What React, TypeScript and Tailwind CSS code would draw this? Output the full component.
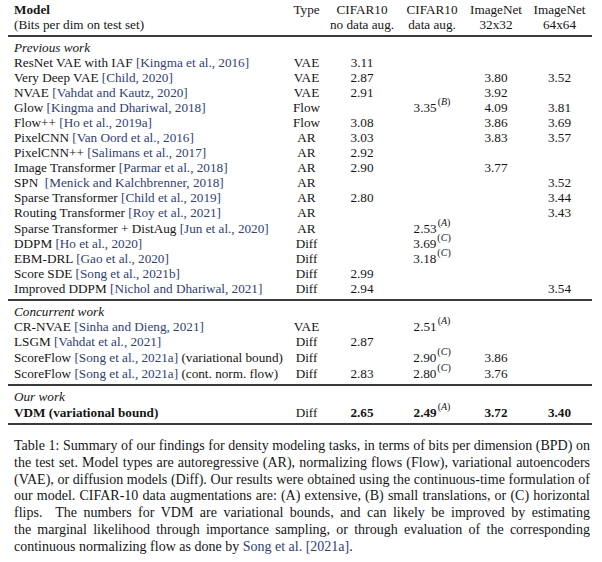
import clsx from 'clsx';

type Val = string | { v: string; s: string };

type Row = {
  name: string;
  cite?: string;
  after?: string;
  type: string;
  c10?: Val;
  c10aug?: Val;
  in32?: Val;
  in64?: Val;
  bold?: boolean;
  tall?: boolean;
};

const previous: Row[] = [
  { name: 'ResNet VAE with IAF', cite: 'Kingma et al., 2016', type: 'VAE', c10: '3.11' },
  { name: 'Very Deep VAE', cite: 'Child, 2020', type: 'VAE', c10: '2.87', in32: '3.80', in64: '3.52' },
  { name: 'NVAE', cite: 'Vahdat and Kautz, 2020', type: 'VAE', c10: '2.91', in32: '3.92' },
  { name: 'Glow', cite: 'Kingma and Dhariwal, 2018', type: 'Flow', c10aug: { v: '3.35', s: 'B' }, in32: '4.09', in64: '3.81' },
  { name: 'Flow++', cite: 'Ho et al., 2019a', type: 'Flow', c10: '3.08', in32: '3.86', in64: '3.69' },
  { name: 'PixelCNN', cite: 'Van Oord et al., 2016', type: 'AR', c10: '3.03', in32: '3.83', in64: '3.57' },
  { name: 'PixelCNN++', cite: 'Salimans et al., 2017', type: 'AR', c10: '2.92' },
  { name: 'Image Transformer', cite: 'Parmar et al., 2018', type: 'AR', c10: '2.90', in32: '3.77' },
  { name: 'SPN\u00a0', cite: 'Menick and Kalchbrenner, 2018', type: 'AR', in64: '3.52' },
  { name: 'Sparse Transformer', cite: 'Child et al., 2019', type: 'AR', c10: '2.80', in64: '3.44' },
  { name: 'Routing Transformer', cite: 'Roy et al., 2021', type: 'AR', in64: '3.43' },
  { name: 'Sparse Transformer + DistAug', cite: 'Jun et al., 2020', type: 'AR', c10aug: { v: '2.53', s: 'A' }, tall: true },
  { name: 'DDPM', cite: 'Ho et al., 2020', type: 'Diff', c10aug: { v: '3.69', s: 'C' } },
  { name: 'EBM-DRL', cite: 'Gao et al., 2020', type: 'Diff', c10aug: { v: '3.18', s: 'C' } },
  { name: 'Score SDE', cite: 'Song et al., 2021b', type: 'Diff', c10: '2.99' },
  { name: 'Improved DDPM', cite: 'Nichol and Dhariwal, 2021', type: 'Diff', c10: '2.94', in64: '3.54' },
];

const concurrent: Row[] = [
  { name: 'CR-NVAE', cite: 'Sinha and Dieng, 2021', type: 'VAE', c10aug: { v: '2.51', s: 'A' } },
  { name: 'LSGM', cite: 'Vahdat et al., 2021', type: 'Diff', c10: '2.87' },
  { name: 'ScoreFlow', cite: 'Song et al., 2021a', after: ' (variational bound)', type: 'Diff', c10aug: { v: '2.90', s: 'C' }, in32: '3.86', tall: true },
  { name: 'ScoreFlow', cite: 'Song et al., 2021a', after: ' (cont. norm. flow)', type: 'Diff', c10: '2.83', c10aug: { v: '2.80', s: 'C' }, in32: '3.76', tall: true },
];

const ours: Row[] = [
  { name: 'VDM (variational bound)', type: 'Diff', c10: '2.65', c10aug: { v: '2.49', s: 'A' }, in32: '3.72', in64: '3.40', bold: true, tall: true },
];

const grid = 'grid grid-cols-[280px_37px_74px_66px_62px_65px]';

function Num({ val, bold }: { val?: Val; bold?: boolean }) {
  if (!val) return <div />;
  if (typeof val === 'string') return <div className={clsx('text-center', bold && 'font-bold')}>{val}</div>;
  return (
    <div className="text-center">
      <span className={clsx(bold && 'font-bold')}>{val.v}</span>
      <sup className="text-[10px] top-[-7px] ml-[1px]">
        (<i>{val.s}</i>)
      </sup>
    </div>
  );
}

function TableRow({ row }: { row: Row }) {
  return (
    <div className={clsx(grid, row.tall ? 'h-[16px] pt-[1px]' : 'h-[15px]', 'leading-[15px]')}>
      <div className={clsx('pl-[6px] whitespace-nowrap', row.bold && 'font-bold')}>
        {row.name}
        {row.cite && (
          <>
            {' '}
            <span className="text-[#2f4177]">[{row.cite}]</span>
          </>
        )}
        {row.after}
      </div>
      <div className="text-center">{row.type}</div>
      <Num val={row.c10} bold={row.bold} />
      <Num val={row.c10aug} bold={row.bold} />
      <Num val={row.in32} bold={row.bold} />
      <Num val={row.in64} bold={row.bold} />
    </div>
  );
}

function Section({ label, rows }: { label: string; rows: Row[] }) {
  return (
    <div className="py-[3px]">
      <div className="h-[15px] leading-[15px] pl-[6px] italic">{label}</div>
      {rows.map((r, i) => (
        <TableRow key={i} row={r} />
      ))}
    </div>
  );
}

const Rule = () => <div className="h-[2px] bg-[#3a3a3a]" />;

const caption = [
  'Table 1: Summary of our findings for density modeling tasks, in terms of bits per dimension (BPD) on',
  'the test set. Model types are autoregressive (AR), normalizing flows (Flow), variational autoencoders',
  '(VAE), or diffusion models (Diff). Our results were obtained using the continuous-time formulation of',
  'our model. CIFAR-10 data augmentations are: (A) extensive, (B) small translations, or (C) horizontal',
  'flips.  The numbers for VDM are variational bounds, and can likely be improved by estimating',
  'the marginal likelihood through importance sampling, or through evaluation of the corresponding',
];

export default function App() {
  return (
    <div className="w-[602px] h-[562px] bg-white text-[#151515] [font-family:Liberation_Serif,Times_New_Roman,serif] text-[13.2px] overflow-hidden">
      <div className="pl-[8px] w-[592px] pt-[2px]">
        {/* header */}
        <div className={clsx(grid, 'leading-[15px] pb-[3px]')}>
          <div className="pl-[6px]">
            <div className="font-bold">Model</div>
            <div>(Bits per dim on test set)</div>
          </div>
          <div className="text-center">Type</div>
          <div className="text-center">
            <div>CIFAR10</div>
            <div>no data aug.</div>
          </div>
          <div className="text-center">
            <div>CIFAR10</div>
            <div>data aug.</div>
          </div>
          <div className="text-center">
            <div>ImageNet</div>
            <div>32x32</div>
          </div>
          <div className="text-center">
            <div>ImageNet</div>
            <div>64x64</div>
          </div>
        </div>
        <Rule />
        <Section label="Previous work" rows={previous} />
        <Rule />
        <Section label="Concurrent work" rows={concurrent} />
        <Rule />
        <Section label="Our work" rows={ours} />
        <Rule />
      </div>

      <div className="mt-[13px] pl-[14px] w-[590px] text-[14px] leading-[16.8px]">
        {caption.map((line, i) => (
          <div key={i} className="whitespace-pre text-justify [text-align-last:justify]">
            {line}
          </div>
        ))}
        <div>
          continuous normalizing flow as done by <span className="text-[#2f4177]">Song et al. [2021a]</span>.
        </div>
      </div>
    </div>
  );
}
